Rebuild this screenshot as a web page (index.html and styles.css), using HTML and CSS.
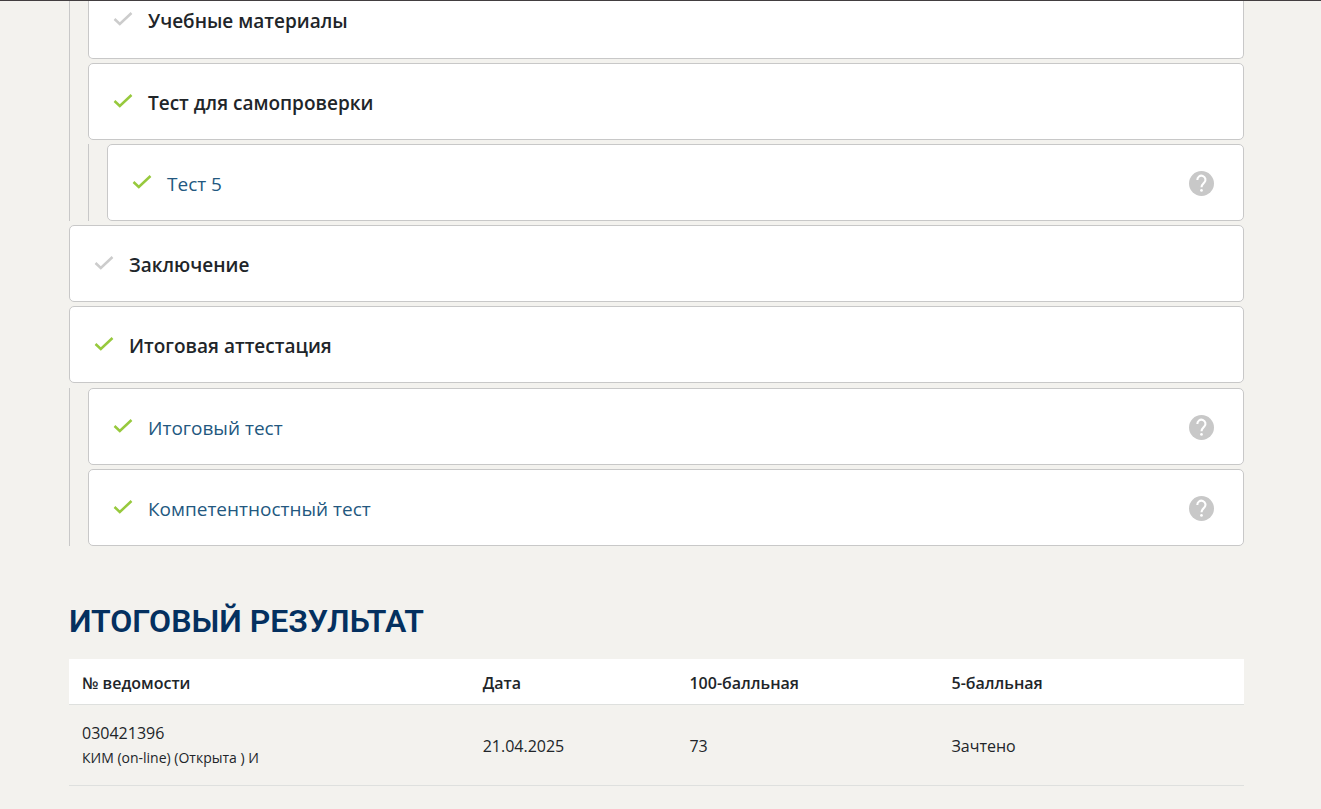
FILE: index.html
```html
<!DOCTYPE html>
<html lang="ru">
<head>
  <meta charset="utf-8">
  <title>Итоговый результат</title>
  <link rel="stylesheet" href="styles.css">
</head>
<body>
  <!-- Shared icons -->
  <svg class="sprite" aria-hidden="true">
    <symbol id="check" viewBox="0 0 20 16">
      <path d="M1.5 8 L6.8 13 L18.5 2" fill="none" stroke="currentColor" stroke-width="2.5"/>
    </symbol>
    <symbol id="help" viewBox="0 0 24 24">
      <circle cx="12" cy="12" r="12" fill="currentColor"/>
      <path d="M8 8.6 A3.9 3.9 0 1 1 14.7 11.1 C13 12.8 12 13.4 12 15.6" fill="none" stroke="#fff" stroke-width="2"/>
      <circle cx="12" cy="18.6" r="1.3" fill="#fff"/>
    </symbol>
  </svg>

  <main class="page">
    <ul class="tree">
      <li>
        <ul class="subtree">
          <li>
            <div class="card card-first">
              <svg class="check"><use href="#check"/></svg>
              <span class="card-title">Учебные материалы</span>
            </div>
          </li>
          <li>
            <div class="card">
              <svg class="check done"><use href="#check"/></svg>
              <span class="card-title">Тест для самопроверки</span>
            </div>
            <ul class="subtree">
              <li>
                <div class="card">
                  <svg class="check done"><use href="#check"/></svg>
                  <a class="card-link" href="#">Тест 5</a>
                  <button class="help" type="button" aria-label="Справка"><svg><use href="#help"/></svg></button>
                </div>
              </li>
            </ul>
          </li>
        </ul>
      </li>
      <li>
        <div class="card">
          <svg class="check"><use href="#check"/></svg>
          <span class="card-title">Заключение</span>
        </div>
      </li>
      <li>
        <div class="card">
          <svg class="check done"><use href="#check"/></svg>
          <span class="card-title">Итоговая аттестация</span>
        </div>
        <ul class="subtree">
          <li>
            <div class="card">
              <svg class="check done"><use href="#check"/></svg>
              <a class="card-link" href="#">Итоговый тест</a>
              <button class="help" type="button" aria-label="Справка"><svg><use href="#help"/></svg></button>
            </div>
          </li>
          <li>
            <div class="card">
              <svg class="check done"><use href="#check"/></svg>
              <a class="card-link" href="#">Компетентностный тест</a>
              <button class="help" type="button" aria-label="Справка"><svg><use href="#help"/></svg></button>
            </div>
          </li>
        </ul>
      </li>
    </ul>

    <h2 class="heading">Итоговый результат</h2>
    <table class="results">
      <thead>
        <tr>
          <th class="col-sheet">№ ведомости</th>
          <th class="col-date">Дата</th>
          <th class="col-hundred">100-балльная</th>
          <th>5-балльная</th>
        </tr>
      </thead>
      <tbody>
        <tr>
          <td>030421396<div class="note">КИМ (on-line) (Открыта ) И</div></td>
          <td>21.04.2025</td>
          <td>73</td>
          <td>Зачтено</td>
        </tr>
      </tbody>
    </table>
  </main>
</body>
</html>
```
FILE: styles.css
```css
* {
  box-sizing: border-box;
}
body {
  margin: 0;
  border-top: 1px solid #423e40;
  background-color: #f3f2ee;
  color: #212529;
  font-family: "Open Sans", "Noto Sans", sans-serif;
  font-size: 16px;
}
.sprite {
  display: none;
}
.page {
  padding: 0 77px 0 69px;
}
/*Course tree*/
.tree,
.subtree {
  display: flex;
  flex-direction: column;
  gap: 4px;
  margin: 0;
  padding: 0;
  list-style: none;
}
.subtree {
  padding-left: 18px;
  border-left: 1px solid #c8c8c8;
}
.card + .subtree {
  margin-top: 4px;
}
/*Top level sections stand a little further from their tests*/
.tree > li > .card + .subtree {
  margin-top: 5px;
}
.card {
  display: flex;
  align-items: center;
  height: 77px;
  padding: 2px 29px 0 24px;
  background-color: #fff;
  border: 1px solid #c8c8c8;
  border-radius: 5px;
  font-size: 19px;
  line-height: 28px;
}
/*The first card continues above the top edge*/
.card-first {
  align-items: flex-start;
  height: 58px;
  padding-top: 6px;
  border-top: none;
  border-radius: 0 0 5px 5px;
}
.check {
  flex: none;
  width: 20px;
  height: 16px;
  margin: 0 15px 4px 0;
  color: #ccc;
}
.card-first .check {
  margin-top: 4px;
}
.done {
  color: #97c93d;
}
.card-title {
  font-weight: 600;
}
.card-link {
  color: #23587f;
  text-decoration: none;
}
.help {
  width: 25px;
  height: 25px;
  margin-left: auto;
  padding: 0;
  border: none;
  background: none;
  color: #c8c8c8;
  cursor: pointer;
}
.help svg {
  display: block;
  width: 25px;
  height: 25px;
}
/*Final result*/
.heading {
  margin: 53px 0 16px;
  color: #04305f;
  font-family: Roboto, sans-serif;
  font-size: 32px;
  font-weight: 600;
  line-height: 44px;
  text-transform: uppercase;
}
.results {
  width: 100%;
  table-layout: fixed;
  border-collapse: collapse;
  line-height: 24px;
}
.results th,
.results td {
  padding: 15px 13px;
  border-bottom: 1px solid #dee0de;
  text-align: left;
}
.results th {
  padding: 12px 13px 9px;
  background-color: #fff;
  font-weight: 600;
}
.results td {
  padding: 16px 13px 14px;
}
.col-sheet {
  width: 34.1%;
}
.col-date {
  width: 17.6%;
}
.col-hundred {
  width: 22.3%;
}
.note {
  font-size: 14px;
  line-height: 26px;
}
```
